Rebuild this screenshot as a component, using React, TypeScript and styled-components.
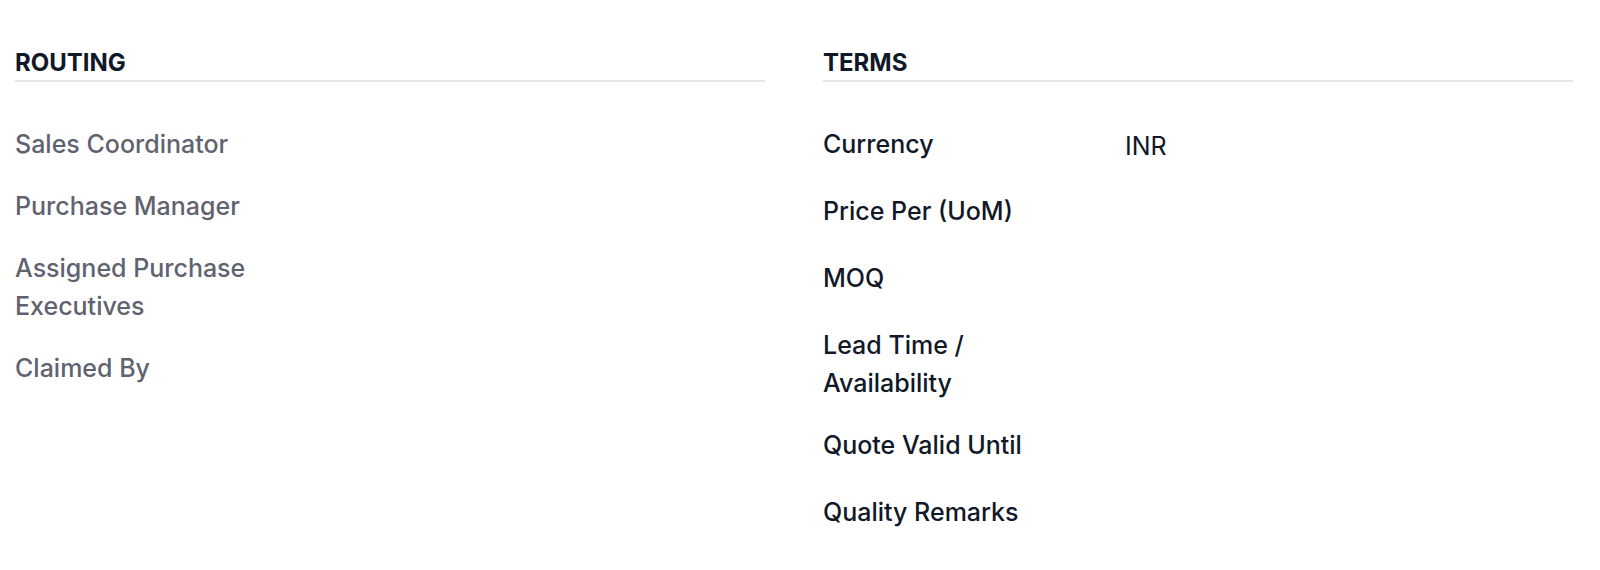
import React from "react";
import styled, { createGlobalStyle } from "styled-components";

const GlobalStyle = createGlobalStyle`
  *, *::before, *::after { box-sizing: border-box; }
  body {
    margin: 0;
    background: #ffffff;
    color: #111827;
    font-family: Inter, "Liberation Sans", sans-serif;
    font-size: 25px;
    line-height: 38px;
  }
`;

const Sheet = styled.main`
  display: grid;
  grid-template-columns: 1fr 1fr;
  column-gap: 58px;
  padding: 48px 27px 16px 15px;
`;

const Group = styled.section`
  min-width: 0;
`;

const GroupTitle = styled.h2`
  margin: 0 0 43px;
  padding-bottom: 2px;
  border-bottom: 2px solid #e5e5e6;
  font-size: 24px;
  line-height: 30px;
  font-weight: 700;
`;

const Fields = styled.dl`
  display: flex;
  flex-direction: column;
  gap: 24px;
  margin: 0;
`;

const Field = styled.div<{ $readOnly?: boolean }>`
  display: grid;
  grid-template-columns: 240px 1fr;
  column-gap: 62px;
  min-height: ${(p) => (p.$readOnly ? 38 : 43)}px;
`;

const Label = styled.dt<{ $muted?: boolean }>`
  font-weight: 500;
  color: ${(p) => (p.$muted ? "#5f636f" : "#111827")};
`;

const Value = styled.dd`
  margin: 0;
  padding-top: 2px;
`;

type Item = { label: string; value?: string };

const routing: Item[] = [
  { label: "Sales Coordinator" },
  { label: "Purchase Manager" },
  { label: "Assigned Purchase Executives" },
  { label: "Claimed By" },
];

const terms: Item[] = [
  { label: "Currency", value: "INR" },
  { label: "Price Per (UoM)" },
  { label: "MOQ" },
  { label: "Lead Time / Availability" },
  { label: "Quote Valid Until" },
  { label: "Quality Remarks" },
];

type FieldGroupProps = { title: string; items: Item[]; readOnly?: boolean };

function FieldGroup({ title, items, readOnly }: FieldGroupProps) {
  return (
    <Group>
      <GroupTitle>{title}</GroupTitle>
      <Fields>
        {items.map((item) => (
          <Field key={item.label} $readOnly={readOnly}>
            <Label $muted={readOnly}>{item.label}</Label>
            {item.value && <Value>{item.value}</Value>}
          </Field>
        ))}
      </Fields>
    </Group>
  );
}

export default function App() {
  return (
    <>
      <GlobalStyle />
      <Sheet>
        <FieldGroup title="ROUTING" items={routing} readOnly />
        <FieldGroup title="TERMS" items={terms} />
      </Sheet>
    </>
  );
}
